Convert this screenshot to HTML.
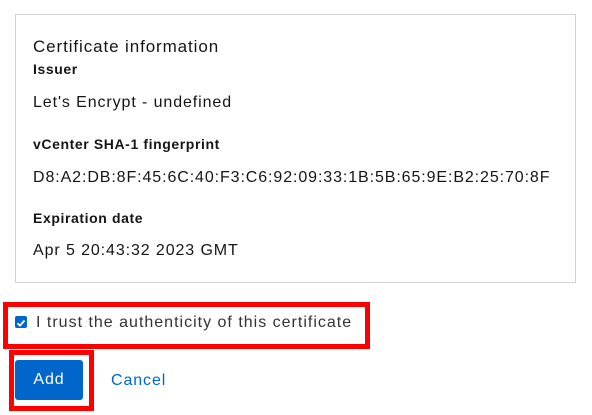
<!DOCTYPE html><html><head><style>
body{margin:0;width:592px;height:415px;background:#fff;font-family:"Liberation Sans",sans-serif;color:#151515;position:relative;overflow:hidden;letter-spacing:0.9px}
.box{position:absolute;left:15px;top:14px;width:561px;height:269px;border:1px solid #d2d2d2;box-sizing:border-box}
.t{position:absolute;left:33px;white-space:nowrap}
.h{font-size:17px}
.l{font-size:14px;font-weight:bold;letter-spacing:0.6px}
.v{font-size:16px}
.r1{position:absolute;left:3px;top:302px;width:367px;height:47px;border:5px solid #f00;box-sizing:border-box}
.r2{position:absolute;left:9px;top:350px;width:85px;height:61px;border:5px solid #f00;box-sizing:border-box}
.btn{position:absolute;left:15px;top:360px;width:68px;height:40px;background:#0066cc;border-radius:3px;color:#fff;font-size:16px;text-align:center;line-height:40px}
.cb{position:absolute;left:15px;top:316px;width:12px;height:12px;background:#0066cc;border-radius:2px}
</style></head><body>
<div class="box"></div>
<div class="t h" style="top:37px">Certificate information</div>
<div class="t l" style="top:61px">Issuer</div>
<div class="t v" style="top:94px">Let's Encrypt - undefined</div>
<div class="t l" style="top:136px">vCenter SHA-1 fingerprint</div>
<div class="t v" style="top:169px">D8:A2:DB:8F:45:6C:40:F3:C6:92:09:33:1B:5B:65:9E:B2:25:70:8F</div>
<div class="t l" style="top:210px">Expiration date</div>
<div class="t v" style="top:242px">Apr 5 20:43:32 2023 GMT</div>
<div class="r1"></div>
<div class="cb"><svg width="12" height="12" viewBox="0 0 12 12"><path d="M2.5 6.2 L5 8.6 L9.5 3.5" stroke="#fff" stroke-width="1.8" fill="none"/></svg></div>
<div class="t v" style="left:36px;top:314px;color:#333;letter-spacing:1px">I trust the authenticity of this certificate</div>
<div class="r2"></div>
<div class="btn">Add</div>
<div class="t v" style="left:111px;top:372px;color:#0066cc">Cancel</div>
</body></html>
